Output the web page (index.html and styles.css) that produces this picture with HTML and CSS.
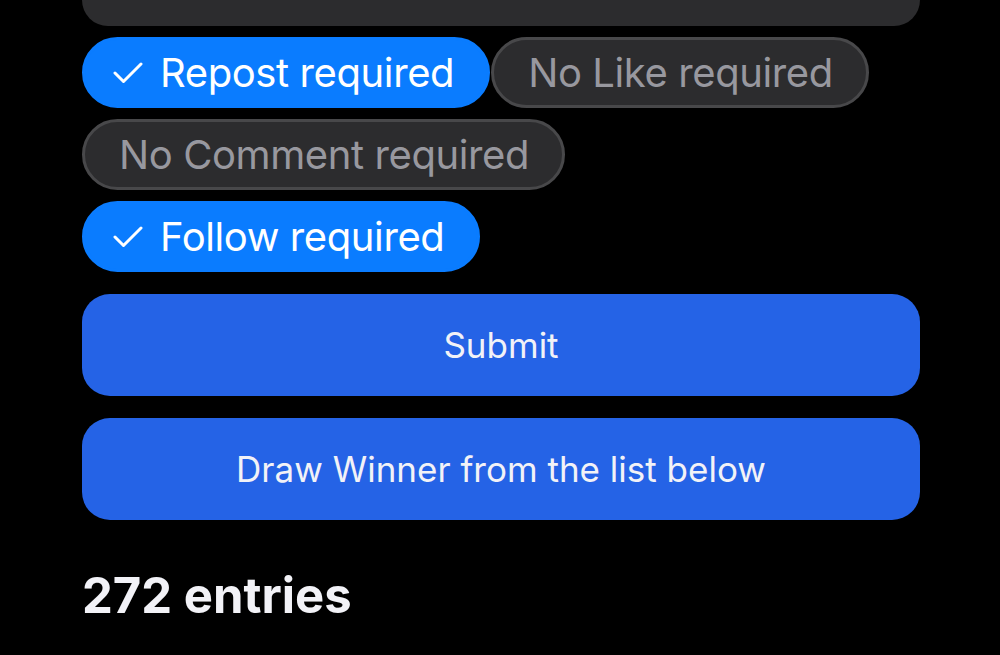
FILE: index.html
```html
<!DOCTYPE html>
<html lang="en">
<head>
    <meta charset="UTF-8" />
    <meta name="viewport" content="width=device-width, initial-scale=1" />
    <title>Giveaway</title>
    <link rel="stylesheet" href="styles.css">
</head>
<body>
    <div id="form">
        <div class="field"></div>
        <div id="chips">
            <button class="chip on">
                <svg class="check" viewBox="0 0 30 22"><path d="M2 11 L10.5 19.5 L28 2" /></svg>
                Repost required
            </button>
            <button class="chip">No Like required</button>
            <button class="chip">No Comment required</button>
            <button class="chip on">
                <svg class="check" viewBox="0 0 30 22"><path d="M2 11 L10.5 19.5 L28 2" /></svg>
                Follow required
            </button>
        </div>
        <button class="action">Submit</button>
        <button class="action">Draw Winner from the list below</button>
        <div class="count">272 entries</div>
    </div>
</body>
</html>
```

FILE: styles.css
```css
body {
    font-family: Inter, 'Noto Sans', sans-serif;
    background: #000;
    color: #f2f2f7;
    margin: 0;
    padding: 0;
}
#form {
    width: 838px;
    margin-left: 82px;
    display: flex;
    flex-direction: column;
}
.field {
    height: 26px;
    background: #2c2c2e;
    border-radius: 0 0 26px 26px;
}
#chips {
    display: flex;
    flex-wrap: wrap;
    gap: 11px 1px;
    margin-top: 11px;
}
.chip {
    height: 71px;
    box-sizing: border-box;
    display: flex;
    align-items: center;
    padding: 0 33px 0 34px;
    border-radius: 36px;
    border: 3px solid #48484a;
    background: #2c2c2e;
    color: #98989f;
    font-family: inherit;
    font-size: 40px;
    letter-spacing: -0.4px;
}
.chip.on {
    background: #0a7cff;
    border-color: #0a7cff;
    color: #fff;
    padding-left: 28px;
}
.check {
    width: 30px;
    height: 22px;
    margin-right: 17px;
    fill: none;
    stroke: #fff;
    stroke-width: 3;
    stroke-linecap: round;
    stroke-linejoin: round;
}
.action {
    height: 102px;
    margin-top: 22px;
    border: none;
    border-radius: 28px;
    background: #2563e6;
    color: #f2f2f7;
    font-family: inherit;
    font-size: 35px;
}
.count {
    margin-top: 46px;
    font-size: 49px;
    font-weight: 700;
    color: #f2f2f7;
}
```
